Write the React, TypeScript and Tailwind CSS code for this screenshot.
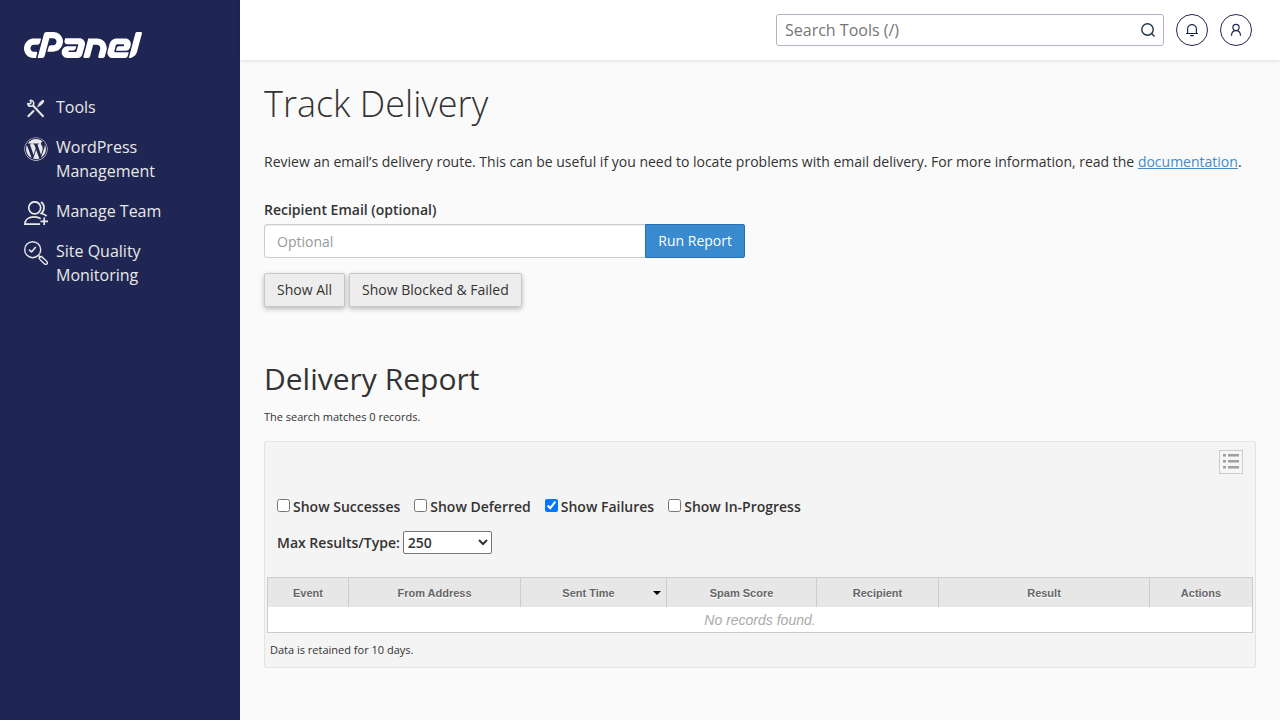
import { useState } from "react";
import type { ReactNode } from "react";
import { FaCpanel, FaWordpress } from "react-icons/fa";

const ToolsIcon = () => (
  <svg viewBox="0 0 24 24" className="h-6 w-6" fill="none" stroke="currentColor">
    <path d="m9 8.500 10.500 11.300" strokeWidth="2" />
    <path d="M10 13.500 3.800 19.800" strokeWidth="2" />
    <path d="m13.500 10 2.500-2.500" strokeWidth="1.300" />
    <path
      d="M14.800 7.600c.2-1.400 2.300-3.600 4.300-4.400l.8.800c-.7 2-2.500 4-4.300 4.500z"
      fill="currentColor"
      strokeWidth="1"
      strokeLinejoin="round"
    />
    <path
      d="M6.200 3.400c1.800-.3 3.500 1 3.500 2.900 0 1.800-1.300 3-3 3-1.600 0-2.900-1.200-3-2.900l2.100.7 1.200-1.300z"
      strokeWidth="1.500"
      strokeLinejoin="round"
    />
  </svg>
);

const TeamIcon = () => (
  <svg
    viewBox="0 0 24 24"
    className="h-6 w-6"
    fill="none"
    stroke="currentColor"
    strokeWidth="1.700"
  >
    <circle cx="10.700" cy="6.800" r="6" />
    <path d="M16 23.100H.9c0-4.400 3.700-7.300 9.200-7.300 2.900 0 5 .6 6.700 1.800" />
    <path d="M17 .9c3.700 2.200 4.200 8.200.3 11.600 2.500.5 4.500 1.500 5.300 2.800" />
    <path d="M20.200 16.500v7.500M16.500 20.300H24" />
  </svg>
);

const QualityIcon = () => (
  <svg
    viewBox="0 0 24 24"
    className="h-6 w-6"
    fill="none"
    stroke="currentColor"
    strokeWidth="1.400"
    strokeLinejoin="round"
  >
    <circle cx="8.700" cy="8.700" r="8" />
    <path d="m5 8.600 2.500 2.400L11.800 6" strokeWidth="1.600" />
    <path d="m14.300 14.300 2.200 2.200" />
    <path d="M15.300 17.700c-.6-.7.900-2.500 2-2.200.6.200 5.300 4.700 5.800 5.400 1 1.500-.8 3.200-2.300 2.200-.8-.5-5-4.700-5.500-5.400z" />
  </svg>
);

const SearchIcon = () => (
  <svg
    viewBox="0 0 16 16"
    className="h-4 w-4"
    fill="none"
    stroke="currentColor"
    strokeWidth="1.400"
  >
    <circle cx="7.500" cy="7.500" r="5.700" />
    <path d="m11.600 11.600 3 3" />
  </svg>
);

const BellIcon = () => (
  <svg
    viewBox="0 0 16 16"
    className="h-4 w-4"
    fill="none"
    stroke="currentColor"
    strokeWidth="1.200"
  >
    <path d="M3.600 11.400V7a4.400 4.400 0 0 1 8.800 0v4.400" />
    <path d="M2 11.500h12M6.200 13.600h3.600" />
  </svg>
);

const UserIcon = () => (
  <svg
    viewBox="0 0 16 16"
    className="h-4 w-4"
    fill="none"
    stroke="currentColor"
    strokeWidth="1.200"
  >
    <circle cx="8" cy="5.400" r="3.100" />
    <path d="M3.500 13.800c0-3.100 1.800-5.200 4.500-5.200s4.500 2.100 4.500 5.200" />
  </svg>
);

const ListIcon = () => (
  <svg viewBox="0 0 16 16" className="h-4 w-4">
    {[0, 6, 12].map((y) => (
      <g key={y}>
        <path d={`M0 ${y}h3v2H0zM5 ${y}h11v2H5z`} fill="#a0a0a0" />
        <path d={`M0 ${y + 2}h3v1H0zM5 ${y + 2}h11v1H5z`} fill="#c8c8c8" />
      </g>
    ))}
  </svg>
);

const navItems: { label: string; icon: ReactNode }[] = [
  { label: "Tools", icon: <ToolsIcon /> },
  { label: "WordPress Management", icon: <FaWordpress size={24} /> },
  { label: "Manage Team", icon: <TeamIcon /> },
  { label: "Site Quality Monitoring", icon: <QualityIcon /> },
];

const columns = [
  { label: "Event", width: "w-[81px]" },
  { label: "From Address", width: "w-[172px]" },
  { label: "Sent Time", width: "w-[146px]", sorted: true },
  { label: "Spam Score", width: "w-[150px]" },
  { label: "Recipient", width: "w-[122px]" },
  { label: "Result", width: "w-[211px]" },
  { label: "Actions", width: "w-auto" },
];

const Sidebar = () => (
  <aside className="w-60 shrink-0 bg-[#202653] px-6 pt-8 text-[#e8e8e8]">
    <a href="#home" aria-label="cPanel" className="block text-white">
      <FaCpanel viewBox="0 179 640 141" className="h-[26px] w-[118px]" />
    </a>
    <nav className="mt-[37px] flex flex-col gap-4">
      {navItems.map((item) => (
        <a
          key={item.label}
          href="#nav"
          className="flex items-start gap-2 text-base leading-6"
        >
          <span className="mt-0.5 -mb-0.5 shrink-0">{item.icon}</span>
          <span>{item.label}</span>
        </a>
      ))}
    </nav>
  </aside>
);

const Header = () => (
  <header className="flex h-[60px] items-center justify-end gap-3 bg-white px-7 text-[#202653] shadow-[0_1px_4px_rgba(0,0,0,0.12)]">
    <form className="flex h-8 w-[388px] items-center rounded-[3px] border border-[#b4b3c6] bg-white pr-[7px] pl-2">
      <input
        type="text"
        aria-label="Search Tools"
        placeholder="Search Tools (/)"
        className="min-w-0 flex-1 text-base outline-none placeholder:text-[#757575]"
      />
      <button type="button" aria-label="Search" className="text-[#1f3347]">
        <SearchIcon />
      </button>
    </form>
    <button
      type="button"
      aria-label="Notifications"
      className="flex h-8 w-8 items-center justify-center rounded-full border border-[#202653]"
    >
      <BellIcon />
    </button>
    <button
      type="button"
      aria-label="Account"
      className="flex h-8 w-8 items-center justify-center rounded-full border border-[#202653]"
    >
      <UserIcon />
    </button>
  </header>
);

const App = () => {
  const [filters, setFilters] = useState([
    { label: "Show Successes", checked: false },
    { label: "Show Deferred", checked: false },
    { label: "Show Failures", checked: true },
    { label: "Show In-Progress", checked: false },
  ]);

  const toggle = (label: string) =>
    setFilters(
      filters.map((f) => (f.label === label ? { ...f, checked: !f.checked } : f))
    );

  const greyButton =
    "h-[34px] rounded-[2px] border border-[#c8c8c8] bg-[#ededed] px-3 shadow-[0_2px_5px_rgba(0,0,0,0.26)]";

  return (
    <div className="flex min-h-screen bg-[#fafafa] font-['Open_Sans',sans-serif] text-sm leading-5 text-[#333]">
      <Sidebar />
      <div className="min-w-0 flex-1">
        <Header />
        <main className="px-6 pt-5 pb-12">
          <h1 className="text-4xl leading-12 font-light">Track Delivery</h1>
          <p className="mt-6">
            Review an email’s delivery route. This can be useful if you need to
            locate problems with email delivery. For more information, read the{" "}
            <a href="#documentation" className="text-[#428bca] underline">
              documentation
            </a>
            .
          </p>

          <form className="mt-7">
            <label htmlFor="email" className="mb-1 block font-semibold">
              Recipient Email (optional)
            </label>
            <div className="flex max-w-[481px]">
              <input
                id="email"
                type="text"
                placeholder="Optional"
                className="h-[34px] min-w-0 flex-1 rounded-l-[4px] border border-r-0 border-[#ccc] bg-white px-3 py-1.5 shadow-[inset_0_1px_1px_rgba(0,0,0,0.075)] outline-none placeholder:text-[#999]"
              />
              <button
                type="button"
                className="h-[34px] rounded-r-[2px] border border-[#2a6fb0] bg-[#3a8ad0] px-3 text-white"
              >
                Run Report
              </button>
            </div>
            <div className="mt-[15px] flex gap-1">
              <button type="button" className={greyButton}>
                Show All
              </button>
              <button type="button" className={greyButton}>
                Show Blocked &amp; Failed
              </button>
            </div>
          </form>

          <h2 className="mt-[52px] text-[30px] leading-10 font-medium">
            Delivery Report
          </h2>
          <p className="mt-2 text-[11px]">The search matches 0 records.</p>

          <section className="mt-[14px] rounded-[2px] border border-[#e3e3e3] bg-[#f4f4f4] p-[2px]">
            <div className="flex justify-end pt-1.5 pr-[10px]">
              <button
                type="button"
                aria-label="Choose columns"
                className="flex h-6 w-6 items-center justify-center border border-[#ccc] bg-[#f6f6f6]"
              >
                <ListIcon />
              </button>
            </div>

            <div className="mt-[23px] flex flex-wrap gap-x-[14px] px-[10px] font-semibold">
              {filters.map((filter) => (
                <label
                  key={filter.label}
                  className="flex items-start gap-[3px]"
                >
                  <input
                    type="checkbox"
                    checked={filter.checked}
                    onChange={() => toggle(filter.label)}
                    className="mt-0.5 h-[13px] w-[13px]"
                  />
                  {filter.label}
                </label>
              ))}
            </div>

            <div className="mt-[14px] flex items-center gap-[3px] px-[10px] font-semibold">
              <label htmlFor="max">Max Results/Type:</label>
              <select
                id="max"
                defaultValue="250"
                className="h-[23px] w-[89px] rounded-[2px] border border-[#767676] bg-white"
              >
                <option>50</option>
                <option>100</option>
                <option>250</option>
                <option>500</option>
              </select>
            </div>

            <table className="mt-[23px] w-full table-fixed border-separate border-spacing-0 border border-[#ccc] bg-white font-['Liberation_Sans',sans-serif]">
              <thead>
                <tr className="h-[29px] bg-[#e7e7e7] text-[11px] text-[#666]">
                  {columns.map((col) => (
                    <th
                      key={col.label}
                      className={`${col.width} border-r border-[#ccc] p-0 pt-px font-bold text-shadow-[0_1px_0_#fff] last:border-r-0`}
                    >
                      <div className={col.sorted ? "relative pr-[10px]" : ""}>
                        {col.label}
                        {col.sorted && (
                          <svg
                            viewBox="0 0 8 4"
                            className="absolute top-2 right-[5px] h-1 w-2"
                          >
                            <path d="M0 0h8L4 4z" />
                          </svg>
                        )}
                      </div>
                    </th>
                  ))}
                </tr>
              </thead>
              <tbody>
                <tr className="h-[25px]">
                  <td
                    colSpan={columns.length}
                    className="p-0 text-center text-[#aaa] italic"
                  >
                    No records found.
                  </td>
                </tr>
              </tbody>
            </table>
            <p className="mt-[7px] mb-[5px] px-[3px] text-[11px]">
              Data is retained for 10 days.
            </p>
          </section>
        </main>
      </div>
    </div>
  );
};

export default App;
